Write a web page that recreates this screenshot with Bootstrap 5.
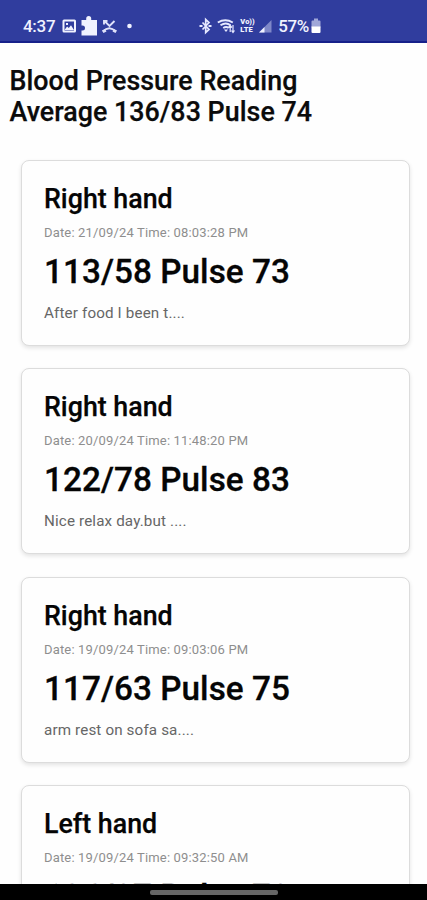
<!DOCTYPE html>
<html lang="en">
<head>
<meta charset="utf-8">
<meta name="viewport" content="width=device-width, initial-scale=1">
<title>Blood Pressure Reading</title>
<link href="https://cdn.jsdelivr.net/npm/bootstrap@5.3.0/dist/css/bootstrap.min.css" rel="stylesheet">
<style>
body{font-family:Roboto,"Noto Sans",sans-serif;background:#fefefe;color:#0b0b0b}
.statusbar{height:43px;background:#303d9e;border-bottom:2px solid #17208a;padding:11px 0 0 23px;color:#f0f2ff;font-size:17px;line-height:30px;font-weight:500}
.statusbar svg{flex:none;display:block}
.clock{width:39px;letter-spacing:-.3px}
.device-state{padding-right:105px}
.volte{font-size:7.5px;line-height:8px;font-weight:900;width:16px;margin:0 3px 0 5px}
.volte span{display:block}
.level{letter-spacing:-.4px;margin-left:6px}
.page-title{font-size:26.8px;line-height:31px;font-weight:500;padding:23px 9.5px 0;margin-bottom:32px;letter-spacing:.04px;-webkit-text-stroke:.25px}
.readings{padding:0 17.5px 0 20.5px;gap:22.3px}
.reading{height:186px;border:1px solid #dcdcdc;border-radius:8px;box-shadow:0 2px 4px rgba(0,0,0,.11);padding:20px 22.5px 0;flex:none;background:#fefefe}
.hand{font-size:26.8px;line-height:36px;font-weight:500;color:#050505;-webkit-text-stroke:.25px}
.when{font-size:13px;line-height:20px;color:#8e8e8e;letter-spacing:.16px;margin-top:6px}
.pulse{font-size:33.3px;line-height:40px;font-weight:500;color:#050505;margin-top:9px;letter-spacing:.05px;-webkit-text-stroke:.3px}
.note{font-size:15.2px;line-height:22px;letter-spacing:.14px;color:#666;margin-top:10px}
.navhandle{height:16px;background:#000;padding-top:6px}
.navhandle span{width:128px;height:5px;border-radius:2px;background:#666}
</style>
</head>
<body>
<div class="vh-100 d-flex flex-column overflow-hidden">
<header class="statusbar d-flex align-items-center flex-shrink-0">
  <span class="clock">4:37</span>
  <svg width="80" height="26" viewBox="62 13 80 26" fill="#f0f2ff">
    <path fill-rule="evenodd" d="M64 19.500h10.500q1.500 0 1.500 1.500v10q0 1.500-1.500 1.500h-10.500q-1.500 0-1.500-1.500v-10q0-1.500 1.500-1.500zM64.500 21.500v9h9.500v-9z"/>
    <path d="M64.500 30l2.600-3.500 1.700 1.600 2.200-2.800 3 4.700zM66 23h2v2h-2z"/>
    <path d="M81.500 20h4.700v-1.500a2.500 2.500 0 0 1 5 0v1.500h5.800v15.500h-15.500v-5h1a2.200 2.200 0 0 0 0-5h-1z"/>
    <path d="M102.800 31.500q6.500-6.500 13 0M105 21.500l4.500 4.500 5-5M104 24.500v-3.500h3.500" fill="none" stroke="#dfe2fa" stroke-width="1.900"/>
    <path d="M102 30.500l3-1.500 1.500 2.500-3 1.500zM117 30.500l-3-1.500-1.500 2.500 3 1.500z" fill="#dfe2fa"/>
    <circle cx="129.500" cy="26" r="2.300"/>
  </svg>
  <div class="device-state d-flex align-items-center ms-auto">
    <svg width="38" height="26" viewBox="197 13 38 26" fill="none" stroke="#e6e9ff">
      <path d="M202.500 22.500l6.500 7-3.300 3v-13l3.300 3-6.500 7" stroke-width="1.700"/>
      <path d="M199.500 26h3M208.500 26h3" stroke-width="2"/>
      <path d="M217.800 22.500q7.500-4.500 15 0M220.500 25.300q5.500-3.500 10 0M223.200 28q3-2 5.500 0" stroke-width="1.900"/>
      <path d="M224 29.500l2 2.500 2-2.500z" fill="#e6e9ff" stroke="none"/>
      <path d="M230.200 32v-6M228.500 27.500l1.700-2 1.700 2M233 25v7M231.500 30.500l1.500 2 1.500-2" stroke-width="1.200"/>
    </svg>
    <div class="volte"><span>Vo))</span><span>LTE</span></div>
    <svg width="13" height="26" viewBox="260 13 13 26">
      <path d="M260 32.500l12.500-12.500v12.500z" fill="#7f88c8"/>
      <path d="M260 32.500l5.500-5.500v5.500z" fill="#f0f2ff"/>
    </svg>
    <span class="level">57%</span>
    <svg width="13" height="26" viewBox="309 13 13 26">
      <path d="M314 18.500h4v2h1.500q1 0 1 1v6h-9v-6q0-1 1-1h1.500z" fill="#a0a7d8"/>
      <path d="M311.500 26.500h9v5.500q0 1-1 1h-7q-1 0-1-1z" fill="#fff"/>
    </svg>
  </div>
</header>
<main class="flex-grow-1 overflow-hidden">
  <h1 class="page-title">Blood Pressure Reading<br>Average 136/83 Pulse 74</h1>
  <div class="readings d-flex flex-column">
    <article class="reading">
      <h2 class="hand mb-0">Right hand</h2>
      <p class="when mb-0">Date: 21/09/24 Time: 08:03:28 PM</p>
      <p class="pulse mb-0">113/58 Pulse 73</p>
      <p class="note mb-0">After food I been t....</p>
    </article>
    <article class="reading">
      <h2 class="hand mb-0">Right hand</h2>
      <p class="when mb-0">Date: 20/09/24 Time: 11:48:20 PM</p>
      <p class="pulse mb-0">122/78 Pulse 83</p>
      <p class="note mb-0">Nice relax day.but ....</p>
    </article>
    <article class="reading">
      <h2 class="hand mb-0">Right hand</h2>
      <p class="when mb-0">Date: 19/09/24 Time: 09:03:06 PM</p>
      <p class="pulse mb-0">117/63 Pulse 75</p>
      <p class="note mb-0">arm rest on sofa sa....</p>
    </article>
    <article class="reading">
      <h2 class="hand mb-0">Left hand</h2>
      <p class="when mb-0">Date: 19/09/24 Time: 09:32:50 AM</p>
      <p class="pulse mb-0">136/87 Pulse 78</p>
    </article>
  </div>
</main>
<footer class="navhandle d-flex justify-content-center flex-shrink-0"><span></span></footer>
</div>
</body>
</html>
